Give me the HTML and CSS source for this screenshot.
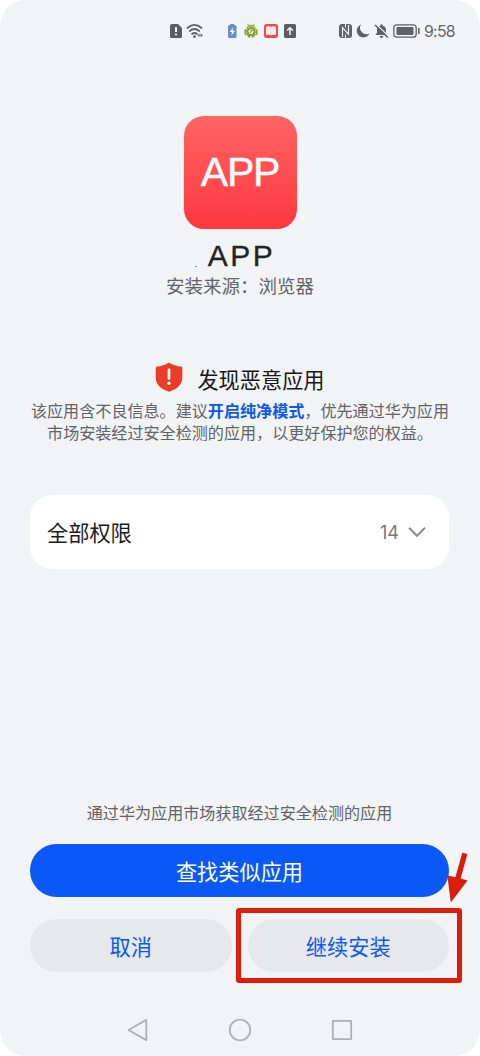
FILE: index.html
```html
<!DOCTYPE html>
<html lang="zh-CN">
<head>
<meta charset="utf-8">
<title>安装应用</title>
<link rel="stylesheet" href="styles.css">
</head>
<body>
<div class="screen">
  <header class="status">
    <div class="status-group signal">
      <svg width="12" height="16" viewBox="0 0 12 16"><path d="M2 1H8L12 5V13.500Q12 15 10.500 15H1.500Q0 15 0 13.500V3Q0 1 2 1Z" fill="#5c5d5f"/><path d="M6 4.200V9" stroke="#f5f5f5" stroke-width="2"/><circle cx="6" cy="11.500" r="1.100" fill="#f5f5f5"/></svg>
      <svg width="18" height="16" viewBox="0 0 18 16"><g fill="none" stroke="#606164" stroke-width="1.700" stroke-linecap="round"><path d="M1.500 5Q8.500-1.200 15.500 5M3.800 8Q8.500 4 13.200 8M6 11Q8.500 9 11 11"/></g><circle cx="8.500" cy="13.700" r="1.400" fill="#606164"/><path d="M13.600 10.500V14L11.500 12.500ZM14.500 10.500V14L17 12.300Z" fill="#606164"/></svg>
    </div>
    <div class="status-group notices">
      <svg width="10" height="16" viewBox="0 0 10 16"><rect x="3" y="1" width="4" height="3" fill="#648fc9"/><rect x="1" y="2" width="8.500" height="13" rx="1.500" fill="#648fc9"/><path d="M6 4.500L2.800 9H5L4.500 12.500L8 7.800H5.600Z" fill="#fff"/></svg>
      <svg width="14" height="16" viewBox="0 0 14 16"><path d="M3.500 .8L5 3M10.500 .8L9 3" stroke="#8ba52c"/><path d="M2.500 5.500A4.500 3.800 0 0 1 11.500 5.500V12Q11.500 13 10.500 13H3.500Q2.500 13 2.500 12Z" fill="#98b52e"/><rect x=".5" y="6" width="2" height="6" rx="1" fill="#89a526"/><rect x="11.500" y="6" width="2" height="6" rx="1" fill="#89a526"/><path d="M5.200 12V14.500M8.800 12V14.500" stroke="#7d9722" stroke-width="2"/><circle cx="7" cy="8.500" r="3.100" fill="#f0f5e4" stroke="#5b6d31" stroke-width=".8"/><path d="M6 10L8.500 7M7 8.500V6.500" stroke="#5a643f" stroke-width=".8"/><circle cx="5" cy="4" r=".5" fill="#fff"/><circle cx="9" cy="4" r=".5" fill="#fff"/></svg>
      <svg width="14" height="16" viewBox="0 0 14 16"><rect y="1" width="14" height="14" rx="2.500" fill="#f34b4c"/><path d="M2 3.700Q5 3 7 3.800Q9 3 12 3.700V12Q9 11.500 7 12.300Q5 11.500 2 12Z" fill="#fff0ef"/><path d="M7 4V12" stroke="#fbc4c3" stroke-width=".7"/></svg>
      <svg width="12" height="16" viewBox="0 0 12 16"><rect y="1" width="12" height="14" rx="1.500" fill="#5d5e60"/><path d="M6 12V5M3.200 7.500L6 4.700L8.800 7.500" fill="none" stroke="#f4f4f4" stroke-width="1.500"/></svg>
    </div>
    <div class="status-group system">
      <svg width="13" height="16" viewBox="0 0 13 16"><rect y="1" width="13" height="14" rx="3" fill="#606164"/><path d="M3.500 14V4.500L9.500 11.500V2" fill="none" stroke="#f1f3f5" stroke-width="1.200"/><path d="M6.500 1V4.500M6.500 15V11.500" stroke="#f1f3f5" stroke-width="1"/></svg>
      <svg width="14" height="16" viewBox="0 0 14 16"><path d="M5 1.500A6.700 6.700 0 1 0 13.600 10.400A6.400 6.400 0 0 1 5 1.500Z" fill="#606164"/></svg>
      <svg width="15" height="16" viewBox="0 0 15 16"><path d="M7.500 1.200A1.300 1.300 0 0 1 8.800 2.700Q12 3.800 12 7V9.800L13.500 12H1.500L3 9.800V7Q3 3.800 6.200 2.700A1.300 1.300 0 0 1 7.500 1.200ZM5.500 13H9.500Q9 15 7.500 15Q6 15 5.500 13Z" fill="#606164"/><path d="M2.200 1.300L14.500 13.300" stroke="#f1f3f5" stroke-width="1.200"/><path d="M1 2L13.800 14.500" stroke="#606164" stroke-width="1.400"/></svg>
      <svg width="27" height="16" viewBox="0 0 27 16"><rect x=".8" y="1.800" width="22.400" height="12.400" rx="3" fill="none" stroke="#606164" stroke-width="1.300"/><rect x="3.500" y="4" width="17" height="8" rx="1" fill="#606164"/><path d="M25.800 5V11" stroke="#606164" stroke-width="1.600"/></svg>
      <span class="clock">9:58</span>
    </div>
  </header>

  <section class="app">
    <div class="app-icon">APP</div>
    <h1 class="app-name">APP</h1>
    <p class="app-source">安装来源：浏览器</p>
  </section>

  <section class="warning">
    <div class="warning-head">
      <svg width="28" height="30" viewBox="0 0 28 30"><path d="M14 .6Q19.500 4.300 26 4.600Q27.300 4.700 27.300 6V15.500Q27.300 25.500 14 29.700Q.7 25.500 .7 15.500V6Q.7 4.700 2 4.600Q8.500 4.300 14 .6Z" fill="#e93d27"/><path d="M14 7.800V16.500" stroke="#fff" stroke-width="2.700" stroke-linecap="round"/><circle cx="14" cy="21.200" r="1.700" fill="#fff"/></svg>
      <h2 class="warning-title">发现恶意应用</h2>
    </div>
    <p class="warning-text">该应用含不良信息。建议<b class="link">开启纯净模式</b>，优先通过华为应用<br>市场安装经过安全检测的应用，以更好保护您的权益。</p>
  </section>

  <section class="permissions">
    <span class="permissions-label">全部权限</span>
    <span class="permissions-count">14</span>
    <svg width="18" height="12" viewBox="0 0 18 12"><path d="M1 1.800L9 9.800L17 1.800" fill="none" stroke="#8b8c8e" stroke-width="2"/></svg>
  </section>

  <section class="actions">
    <p class="hint">通过华为应用市场获取经过安全检测的应用</p>
    <button class="button primary">查找类似应用</button>
    <div class="button-row">
      <button class="button secondary">取消</button>
      <div class="marked">
        <button class="button secondary">继续安装</button>
        <div class="marker"></div>
        <svg class="arrow" width="22" height="52" viewBox="0 0 22 52"><path d="M15.300 .8L20.400 2.100L13.600 26.600L20.500 28.600L3.800 50.500L.3 23.300L8.400 25.300Z" fill="#dc1d0b"/></svg>
      </div>
    </div>
  </section>

  <nav class="navbar">
    <svg width="24" height="24" viewBox="0 0 24 24"><path d="M20.300 1.900V22.100L2.500 12Z"/></svg>
    <svg width="24" height="24" viewBox="0 0 24 24"><circle cx="12" cy="12" r="10.300"/></svg>
    <svg width="24" height="24" viewBox="0 0 24 24"><rect x="2.800" y="2.800" width="18.400" height="18.400" rx=".5"/></svg>
  </nav>
</div>
</body>
</html>
```
FILE: styles.css
```css
* { box-sizing: border-box; }

body {
  margin: 0;
  background: #fff;
  font-family: "Noto Sans CJK SC", sans-serif;
}

h1, h2, p { margin: 0; font-weight: 400; }
svg { display: block; flex: none; }

.screen {
  width: 480px;
  height: 1056px;
  display: flex;
  flex-direction: column;
  background: #f1f3f5;
  border-radius: 26px;
  overflow: hidden;
}

.status {
  height: 62px;
  padding: 0 25px 0 170px;
  display: flex;
  align-items: center;
}
.status-group { display: flex; align-items: center; }
.signal { gap: 4px; }
.notices { gap: 6px; margin-left: 23px; }
.notices svg:first-child { margin-right: 1px; }
.system { gap: 4px; margin-left: 43px; }
.clock {
  padding-top: 1px;
  font: 15.8px/20px Inter, sans-serif;
  letter-spacing: -0.7px;
  color: #66676a;
  white-space: nowrap;
}

.app {
  height: 298px;
  padding-top: 54px;
  display: flex;
  flex-direction: column;
  align-items: center;
}
.app-icon {
  width: 113px;
  height: 113px;
  border-radius: 20px;
  background: linear-gradient(#ff6464, #ff383f);
  color: #fff;
  font: 41px/113px "Liberation Sans", sans-serif;
  letter-spacing: -1.2px;
  text-align: center;
  -webkit-text-stroke: 0.4px #fff;
}
.app-name {
  position: relative;
  margin-top: 10px;
  padding-left: 3px;
  font: 30px/34px "Liberation Sans", sans-serif;
  letter-spacing: 2.5px;
  color: #222325;
  -webkit-text-stroke: 0.3px #222325;
}
/* Small speck left of the name's baseline */
.app-name::before {
  content: "";
  position: absolute;
  left: -10px;
  bottom: 6px;
  width: 2px;
  height: 1px;
  background: #8e8f91;
}
.app-source {
  margin-top: -2px;
  font-size: 18.5px;
  line-height: 28px;
  color: #636467;
}

.warning { height: 135px; text-align: center; }
.warning-head {
  height: 39px;
  padding-top: 2px;
  display: flex;
  justify-content: center;
  gap: 14px;
}
.warning-title {
  font-size: 21.2px;
  line-height: 34px;
  color: #17181a;
}
.warning-text {
  font-size: 16.08px;
  line-height: 22px;
  color: #626366;
  white-space: nowrap;
}
.link { color: #0a59f7; }

.permissions {
  height: 74px;
  margin: 0 31px 0 30px;
  padding: 0 23px 0 17px;
  display: flex;
  align-items: center;
  background: #fff;
  border-radius: 22px;
}
.permissions-label {
  flex: 1;
  padding-bottom: 2px;
  font-size: 21.2px;
  color: #1b1c1e;
}
.permissions-count {
  padding-top: 2px;
  margin-right: 9px;
  font: 18px/24px Inter, sans-serif;
  color: #76777a;
}

.actions {
  margin-top: 232px;
  padding: 0 31px 0 30px;
}
.hint {
  height: 43px;
  font-size: 16.08px;
  line-height: 22px;
  text-align: center;
  color: #626366;
}
.button {
  display: block;
  width: 100%;
  height: 53px;
  padding: 0;
  border: 0;
  border-radius: 27px;
  font: 21.2px/53px "Noto Sans CJK SC", sans-serif;
}
.primary {
  background: #0a59f7;
  color: #fff;
}
.secondary {
  background: #e6e8ea;
  color: #0a59f7;
}
.button-row {
  margin-top: 22px;
  display: grid;
  grid-template-columns: 1fr 1fr;
  gap: 16px;
}
.marked { position: relative; }
.marker {
  position: absolute;
  inset: -11px -13px -11px -12px;
  border: 5px solid #dc1d0b;
  border-radius: 3px;
}
.arrow { position: absolute; top: -67px; right: -20px; }

.navbar {
  margin-top: 46px;
  padding: 0 126px 0 126px;
  display: flex;
  justify-content: space-between;
}
.navbar svg {
  fill: none;
  stroke: #afb0b2;
  stroke-width: 1.8;
  stroke-linejoin: round;
}
```
